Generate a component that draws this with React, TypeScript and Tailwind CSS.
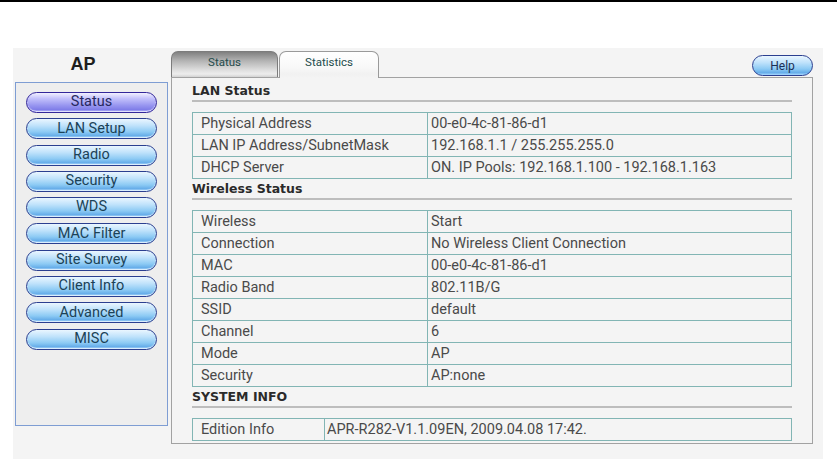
import React from "react";

const navItems = [
  "Status",
  "LAN Setup",
  "Radio",
  "Security",
  "WDS",
  "MAC Filter",
  "Site Survey",
  "Client Info",
  "Advanced",
  "MISC",
];

const lanRows: [string, string][] = [
  ["Physical Address", "00-e0-4c-81-86-d1"],
  ["LAN IP Address/SubnetMask", "192.168.1.1 / 255.255.255.0"],
  ["DHCP Server", "ON. IP Pools: 192.168.1.100 - 192.168.1.163"],
];

const wlRows: [string, string][] = [
  ["Wireless", "Start"],
  ["Connection", "No Wireless Client Connection"],
  ["MAC", "00-e0-4c-81-86-d1"],
  ["Radio Band", "802.11B/G"],
  ["SSID", "default"],
  ["Channel", "6"],
  ["Mode", "AP"],
  ["Security", "AP:none"],
];

function NavButton({ label, active }: { label: string; active?: boolean }) {
  return (
    <div
      className={
        "w-[131px] h-[21px] rounded-full border flex items-center justify-center text-[14.5px] leading-none shadow-[inset_0_-1px_1px_rgba(255,255,255,0.7)] " +
        (active
          ? "border-[#33279a] text-[#28295f] bg-[linear-gradient(to_bottom,#f2f0ff_0%,#c2c0fb_30%,#9896f0_65%,#7f7de8_88%,#b9b8ff_100%)]"
          : "border-[#2b3f90] text-[#1b4257] bg-[linear-gradient(to_bottom,#eaf6ff_0%,#bfe2fb_35%,#8ccaf4_68%,#66ade9_88%,#a9d9ff_100%)]")
      }
    >
      {label}
    </div>
  );
}

function Heading({ children, pt }: { children: React.ReactNode; pt: string }) {
  return (
    <div className={"border-b-2 border-[#bdbdbd] " + pt}>
      <div className="h-[18px] leading-[18px] text-[12.5px] font-bold text-[#2a2a2a] font-[family-name:'DejaVu_Sans',sans-serif]">
        {children}
      </div>
    </div>
  );
}

function InfoTable({
  rows,
  labelW,
  valuePad,
}: {
  rows: [string, string][];
  labelW: string;
  valuePad: string;
}) {
  return (
    <div className="mt-[10px] border border-[#82b5b4]">
      {rows.map(([k, v], i) => {
        const last = i === rows.length - 1;
        return (
          <div
            key={k}
            className={last ? "flex h-[21px]" : "flex h-[22px] border-b border-[#82b5b4]"}
          >
            <div className={"shrink-0 border-r border-[#82b5b4] pl-[8px] flex items-center " + labelW}>
              {k}
            </div>
            <div className={"flex-1 flex items-center " + valuePad}>{v}</div>
          </div>
        );
      })}
    </div>
  );
}

export default function App() {
  return (
    <div className="w-[837px] h-[459px] bg-white overflow-hidden font-[family-name:Roboto,sans-serif]">
      <div className="h-[2px] bg-black" />
      <div className="mt-[46px] ml-[13px] w-[810px] h-[411px] bg-[#f4f4f4] flex pl-[2px] gap-[3px]">
        {/* left column */}
        <div className="w-[153px] flex flex-col">
          <div className="h-[34px] w-[136px] flex items-center justify-center pb-[2px] text-[18px] font-bold text-[#1e1e1e] font-[family-name:'Liberation_Sans',sans-serif]">
            AP
          </div>
          <div className="h-[344px] border border-[#7e9dd3] bg-[#eeeeee] pt-[9px] pl-[10px] flex flex-col gap-[5.3px]">
            {navItems.map((n, i) => (
              <NavButton key={n} label={n} active={i === 0} />
            ))}
          </div>
        </div>

        {/* main column */}
        <div className="w-[642px] pt-[3px] flex flex-col">
          <div className="h-[26px] flex items-end">
            <div className="w-[107px] h-[26px] rounded-t-[7px] border border-b-0 border-[#7c7c7c] flex items-center justify-center pb-[3px] text-[11.5px] text-[#244b4b] bg-[linear-gradient(to_bottom,#808080_0%,#b3b3b3_35%,#dedede_72%,#ededed_88%,#d2d2d2_100%)]">
              Status
            </div>
            <div className="ml-[1px] w-[100px] h-[27px] -mb-px relative z-10 rounded-t-[7px] border border-b-0 border-[#9a9a9a] flex items-center justify-center pb-[4px] text-[11.5px] text-[#244b4b] bg-[linear-gradient(to_bottom,#ffffff_0%,#f8f8f8_60%,#f1f1f1_85%,#f4f4f4_100%)]">
              Statistics
            </div>
            <div className="ml-auto mb-[1px] w-[61px] h-[21px] rounded-full border border-[#2b3f90] flex items-center justify-center text-[12px] text-[#1c2f55] bg-[linear-gradient(to_bottom,#eaf6ff_0%,#bfe2fb_35%,#8ccaf4_68%,#66ade9_88%,#a9d9ff_100%)]">
              Help
            </div>
          </div>
          <div className="h-[367px] border border-[#a2a2a2] px-[20px] text-[14.5px] text-[#4a4a4a]">
            <Heading pt="pt-[4px]">LAN Status</Heading>
            <InfoTable rows={lanRows} labelW="w-[235px]" valuePad="pl-[3px]" />
            <Heading pt="pt-[1px]">Wireless Status</Heading>
            <InfoTable rows={wlRows} labelW="w-[235px]" valuePad="pl-[3px]" />
            <Heading pt="pt-[1px]">SYSTEM INFO</Heading>
            <InfoTable
              rows={[["Edition Info", "APR-R282-V1.1.09EN, 2009.04.08 17:42."]]}
              labelW="w-[132px]"
              valuePad="pl-[2px]"
            />
          </div>
        </div>
      </div>
    </div>
  );
}
